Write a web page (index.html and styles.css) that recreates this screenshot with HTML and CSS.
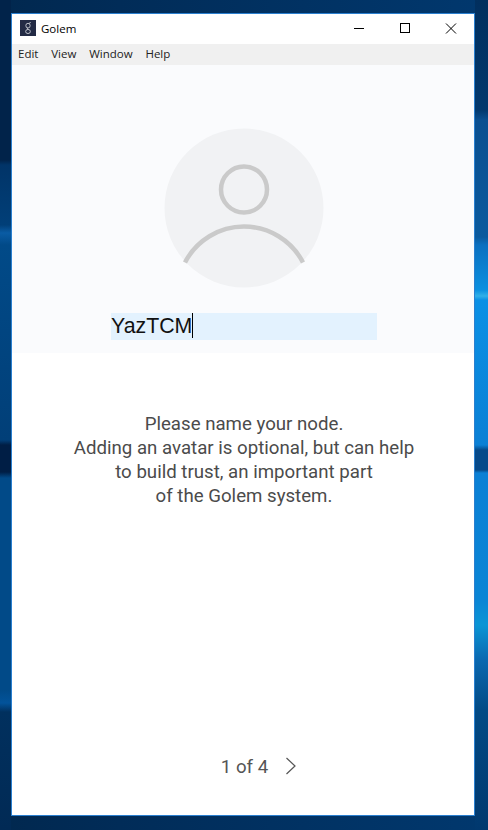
FILE: index.html
```html
<!DOCTYPE html>
<html lang="en">
<head>
<meta charset="utf-8">
<title>Golem</title>
<link rel="stylesheet" href="styles.css">
</head>
<body>
<div class="window">
  <header class="titlebar">
    <svg class="logo" width="16" height="16" viewBox="0 0 17 17">
      <rect width="17" height="17" fill="#232b45"/>
      <g fill="none" stroke="#c0c3cc" stroke-width="1">
        <ellipse cx="8.5" cy="6" rx="2.3" ry="2.5"/>
        <ellipse cx="8.5" cy="12.2" rx="2.5" ry="2.2"/>
        <path d="M9.5 3.6 11.4 2.6M7.4 8.3 8.6 10"/>
      </g>
    </svg>
    <span class="app-name">Golem</span>
    <div class="controls">
      <svg class="control" width="46" height="30" viewBox="0 0 46 30"><path d="M18 14.5H28" stroke="#000" fill="none"/></svg>
      <svg class="control" width="46" height="30" viewBox="0 0 46 30"><rect x="18.5" y="9.5" width="9" height="9" stroke="#000" fill="none"/></svg>
      <svg class="control" width="46" height="30" viewBox="0 0 46 30"><path d="M18 9.5 28 19.5M28 9.5 18 19.5" stroke="#000" fill="none"/></svg>
    </div>
  </header>
  <nav class="menubar">
    <span>Edit</span><span>View</span><span>Window</span><span>Help</span>
  </nav>
  <section class="hero">
    <svg class="avatar" width="160" height="160" viewBox="0 0 160 160">
      <circle cx="80" cy="80" r="79.5" fill="#f1f2f4"/>
      <circle cx="80" cy="61.500" r="23" fill="none" stroke="#cacaca" stroke-width="4.500"/>
      <path d="M21 134.500A66.400 66.400 0 0 1 139 134.500" fill="none" stroke="#cacaca" stroke-width="4.500"/>
    </svg>
    <div class="name-field"><span class="name-text">YazTCM</span><span class="caret"></span></div>
  </section>
  <main class="content">
    <p class="description">Please name your node.<br>Adding an avatar is optional, but can help<br>to build trust, an important part<br>of the Golem system.</p>
    <div class="pager">
      <span>1 of 4</span>
      <svg width="12" height="18" viewBox="0 0 12 18"><path d="M1.500 1 10 9 1.500 17" fill="none" stroke="#555" stroke-width="1.200"/></svg>
    </div>
  </main>
</div>
</body>
</html>
```

FILE: styles.css
```css
* { box-sizing: border-box; }
html, body { margin: 0; height: 100%; }
body {
  width: 488px;
  height: 830px;
  overflow: hidden;
  padding: 13px 13px 14px 11px;
  background:
    linear-gradient(180deg, #01234a 0, #01234a 160px, #013468 165px, #013f78 225px, #0a5ca4 233px, #014a88 245px, #013f78 440px, #001e45 445px, #001e45 472px, #014a88 478px, #014a88 690px, #02539a 703px, #01305e 712px, #012a55 830px) left top / 11px 830px no-repeat,
    linear-gradient(180deg, #012f5e 0, #02386d 110px, #0a4f90 120px, #0a5a9e 237px, #0a70c0 245px, #0a90e0 290px, #30b0e8 296px, #0a90e5 300px, #0b80d5 445px, #064a8a 450px, #064a8a 470px, #0b80d5 473px, #0a85d5 600px, #0a95d5 625px, #0a68b0 660px, #024a85 710px, #01386e 830px) right top / 13px 830px no-repeat,
    linear-gradient(90deg, #01284f 0, #012c58 120px, #01386e 488px);
  font-family: "Roboto", sans-serif;
}
.window {
  width: 464px;
  height: 803px;
  border: 1px solid #2a7fcf;
  background: #fff;
  display: flex;
  flex-direction: column;
}
.titlebar {
  height: 30px;
  display: flex;
  align-items: center;
  padding-left: 8px;
  background: #fff;
  flex: none;
}
.logo { margin-bottom: 2px; }
.app-name {
  margin-left: 5px;
  padding-bottom: 2px;
  font: 11.500px "Open Sans", sans-serif;
  color: #000;
}
.controls { margin-left: auto; display: flex; }
.control { display: block; }
.menubar {
  height: 21px;
  flex: none;
  background: #f0f0f0;
  display: flex;
  align-items: center;
  gap: 12.800px;
  padding: 0 0 2px 6px;
  font: 11.500px "Open Sans", sans-serif;
  color: #222;
}
.hero {
  height: 288px;
  flex: none;
  background: #fafbfd;
  display: flex;
  flex-direction: column;
  align-items: center;
  padding: 63px 0 0 2px;
}
.avatar { display: block; }
.name-field {
  margin-top: 25px;
  width: 266px;
  height: 27px;
  background: #e3f2fe;
  display: flex;
  align-items: center;
  font: 21.330px "Liberation Sans", Arial, sans-serif;
  color: #111;
}
.caret { width: 1px; height: 25px; background: #000; margin-bottom: 2px; }
.content {
  flex: 1;
  display: flex;
  flex-direction: column;
  align-items: center;
  padding: 59px 0 0 2px;
}
.description {
  margin: 0;
  text-align: center;
  font-size: 18.670px;
  line-height: 24px;
  color: #4b4b4b;
}
.pager {
  margin-top: auto;
  margin-bottom: 36px;
  display: flex;
  align-items: center;
  gap: 17px;
  font-size: 18.670px;
  line-height: 24px;
  color: #555;
  padding-left: 30px;
}
.pager svg { display: block; margin-bottom: 2px; }
```
